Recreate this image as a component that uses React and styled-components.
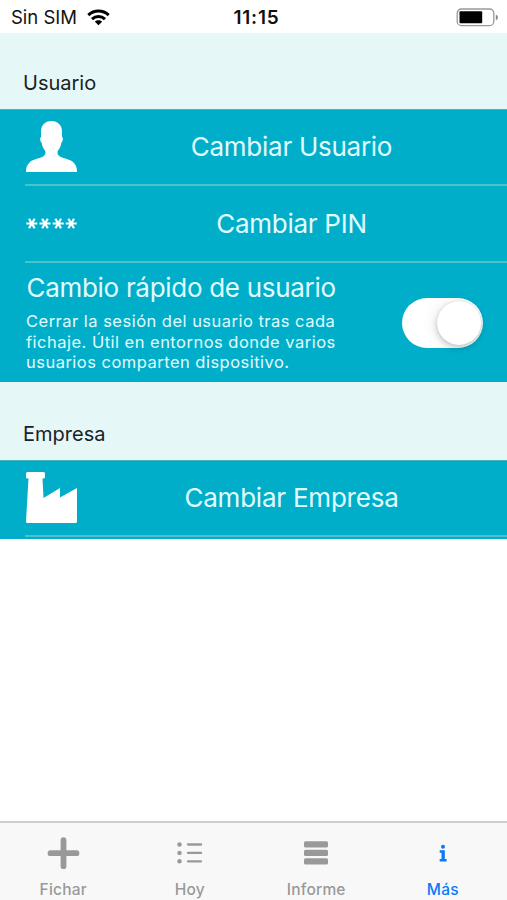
import React from "react";
import styled, { createGlobalStyle } from "styled-components";

const GlobalStyle = createGlobalStyle`
  * {
    box-sizing: border-box;
  }
  body {
    margin: 0;
    background: #fff;
    font-family: Inter, "Liberation Sans", sans-serif;
  }
`;

const Screen = styled.div`
  display: flex;
  flex-direction: column;
  width: 507px;
  height: 900px;
  overflow: hidden;
  background: #fff;
`;

const StatusBar = styled.header`
  display: grid;
  grid-template-columns: 1fr auto 1fr;
  align-items: center;
  flex: none;
  height: 33px;
  padding: 1px 8px 0 11px;
  color: #111;
  font-size: 18.5px;
`;

const Carrier = styled.div`
  display: flex;
  align-items: center;
  gap: 10px;
`;

const Clock = styled.div`
  padding-left: 3px;
  font-size: 19px;
  font-weight: 600;
  letter-spacing: 0.8px;
`;

const BatteryIcon = styled.svg`
  justify-self: end;
  display: block;
`;

const SectionHeader = styled.h2`
  display: flex;
  align-items: flex-end;
  flex: none;
  height: ${(props) => props.$height}px;
  margin: 0;
  padding: 0 23px 13px;
  background: #e6f7f8;
  color: #172326;
  font-size: 20px;
  font-weight: 400;
  line-height: 26px;
`;

const Group = styled.section`
  flex: none;
  height: ${(props) => props.$height}px;
  padding-left: 25px;
  background: #00aec9;
  border-top: 1px solid #42b5bd;
  color: #e0fcff;
`;

const Row = styled.div`
  display: flex;
  align-items: center;
  height: ${(props) => props.$height}px;
  border-bottom: ${(props) => (props.$last ? "none" : "2px solid #4cc1cc")};
`;

const RowIcon = styled.svg`
  flex: none;
  width: 53px;
  height: 53px;
  margin-bottom: 2px;
  fill: #fff;
`;

const RowTitle = styled.div`
  flex: 1;
  padding-right: 2px;
  text-align: center;
  font-size: 26px;
  line-height: 32px;
  letter-spacing: ${(props) => props.$tracking}px;
`;

const SwitchText = styled.div`
  flex: 1;
  padding-left: 1px;
`;

const SwitchTitle = styled.div`
  padding-left: 0.5px;
  font-size: 26px;
  line-height: 32px;
  letter-spacing: -0.3px;
  white-space: nowrap;
`;

const SwitchNote = styled.p`
  margin: 7px 0 0;
  font-size: 16.5px;
  line-height: 20.5px;
  letter-spacing: 0.48px;
  white-space: nowrap;
`;

const Toggle = styled.div`
  display: flex;
  justify-content: flex-end;
  flex: none;
  width: 81px;
  height: 50px;
  margin: 1px 24px 0 0;
  padding: 3px 2px;
  border-radius: 25px;
  background: #fff;
`;

const Knob = styled.div`
  width: 44px;
  height: 44px;
  border-radius: 50%;
  background: #fff;
  box-shadow: 0 3px 6px rgba(0, 0, 0, 0.18), 0 0 2px rgba(0, 0, 0, 0.12),
    -3px 0 14px rgba(0, 0, 0, 0.07);
`;

const TabBar = styled.nav`
  display: grid;
  grid-template-columns: repeat(4, 126.5px);
  flex: none;
  height: 79px;
  margin-top: auto;
  border-top: 2px solid #cdcdcd;
  background: #f8f8f8;
`;

const Tab = styled.div`
  display: flex;
  flex-direction: column;
  align-items: center;
  padding-top: 11.5px;
  color: ${(props) => (props.$active ? "#0b78f6" : "#999")};
  font-size: 15.5px;
  font-weight: 500;
  line-height: 18px;
  letter-spacing: 0.2px;
`;

const TabIcon = styled.svg`
  width: 36px;
  height: 36px;
  margin-bottom: 10.5px;
  fill: currentColor;
`;

const WifiIcon = () => (
  <svg width="23" height="17" viewBox="0 0 23 17" fill="none" stroke="#000" strokeWidth="3">
    <path d="M1.3 6.1C7.1.7 15.9.7 21.7 6.1" />
    <path d="M5 10.1c3.7-3.5 9.3-3.5 13 0" />
    <path d="M11.5 16.3 7.9 12.7c2-1.9 5.2-1.9 7.2 0Z" fill="#000" stroke="none" />
  </svg>
);

const App = () => (
  <>
    <GlobalStyle />
    <Screen>
      <StatusBar>
        <Carrier>
          <span>Sin SIM</span>
          <WifiIcon />
        </Carrier>
        <Clock>11:15</Clock>
        <BatteryIcon width="43" height="19" viewBox="0 0 43 19">
          <rect x="1.2" y="1" width="36.6" height="16.6" rx="4.2" fill="#fff" stroke="#999" strokeWidth="1.3" />
          <rect x="3.5" y="3.3" width="22.7" height="12" rx="1" fill="#000" />
          <path d="M39.8 6.4c2.8.8 2.8 5 0 5.8Z" fill="#888" />
        </BatteryIcon>
      </StatusBar>

      <SectionHeader $height={76}>Usuario</SectionHeader>
      <Group $height={273}>
        <Row $height={76}>
          <RowIcon viewBox="0 0 53 53">
            <path d="M26.5 1C33 1 37 5.4 37 11.500V17c1.400.6 1 4.600-.6 5.400-.5 3.400-1.600 5.900-3.400 8.100-.8 1.700-.6 3.400.5 4.800 3.200 3.500 10.300 3.200 14.500 6.700 3.200 2.700 4 6 4 10H1c0-4 .8-7.300 4-10 4.200-3.500 11.300-3.200 14.500-6.700 1.100-1.400 1.300-3.100.5-4.800-1.800-2.200-2.900-4.700-3.400-8.100-1.600-.8-2-4.800-.6-5.400v-5.500C16 5.400 20 1 26.500 1Z" />
          </RowIcon>
          <RowTitle $tracking={-0.27}>Cambiar Usuario</RowTitle>
        </Row>
        <Row $height={77}>
          <RowIcon viewBox="0 0 53 53">
            {[6.8, 20, 33.2, 46.2].map((x) => (
              <path
                key={x}
                d={`M${x - 5.5} 27.5h11M${x - 2.8} 22.8l5.6 9.4M${x + 2.8} 22.8l-5.6 9.4`}
                stroke="#fff"
                strokeWidth="2.2"
              />
            ))}
          </RowIcon>
          <RowTitle $tracking={-0.27}>Cambiar PIN</RowTitle>
        </Row>
        <Row $height={119} $last>
          <SwitchText>
            <SwitchTitle>Cambio rápido de usuario</SwitchTitle>
            <SwitchNote>
              Cerrar la sesión del usuario tras cada
              <br />
              fichaje. Útil en entornos donde varios
              <br />
              usuarios comparten dispositivo.
            </SwitchNote>
          </SwitchText>
          <Toggle role="switch" aria-checked="true">
            <Knob />
          </Toggle>
        </Row>
      </Group>

      <SectionHeader $height={78}>Empresa</SectionHeader>
      <Group $height={79}>
        <Row $height={76}>
          <RowIcon viewBox="0 0 53 53">
            <path d="M2.5 1h16q1.500 0 1.500 1.500v3.500q0 1.500-1.500 1.500h-1L18.500 27 35 17v9.500L52 17v33.500q0 1.500-1.500 1.500h-48Q1 52 1 50.500L3.500 7.500h-1Q1 7.500 1 6V2.500Q1 1 2.500 1Z" />
          </RowIcon>
          <RowTitle $tracking={-0.22}>Cambiar Empresa</RowTitle>
        </Row>
      </Group>

      <TabBar>
        <Tab>
          <TabIcon viewBox="0 0 36 36">
            <path d="M18.5 5.2v26M5.5 18.2h26" stroke="currentColor" strokeWidth="5.8" strokeLinecap="round" />
          </TabIcon>
          Fichar
        </Tab>
        <Tab>
          <TabIcon viewBox="0 0 36 36">
            {[9.5, 17.9, 26.3].map((y) => (
              <React.Fragment key={y}>
                <circle cx="7.5" cy={y} r="2.2" />
                <path d={`M16 ${y}h13`} stroke="currentColor" strokeWidth="2.3" strokeLinecap="round" />
              </React.Fragment>
            ))}
          </TabIcon>
          Hoy
        </Tab>
        <Tab>
          <TabIcon viewBox="0 0 36 36">
            <rect x="6" y="6.2" width="24" height="6.4" rx="1.5" />
            <rect x="6" y="14.7" width="24" height="6.4" rx="1.5" />
            <rect x="6" y="23.2" width="24" height="6.4" rx="1.5" />
          </TabIcon>
          Informe
        </Tab>
        <Tab $active>
          <TabIcon viewBox="0 0 36 36">
            <circle cx="18" cy="11.7" r="2" />
            <path d="M14.700 15.200h5.100v8.700h1.800v2.500h-6.900v-2.500h1.800v-6.200h-1.800Z" />
          </TabIcon>
          Más
        </Tab>
      </TabBar>
    </Screen>
  </>
);

export default App;
